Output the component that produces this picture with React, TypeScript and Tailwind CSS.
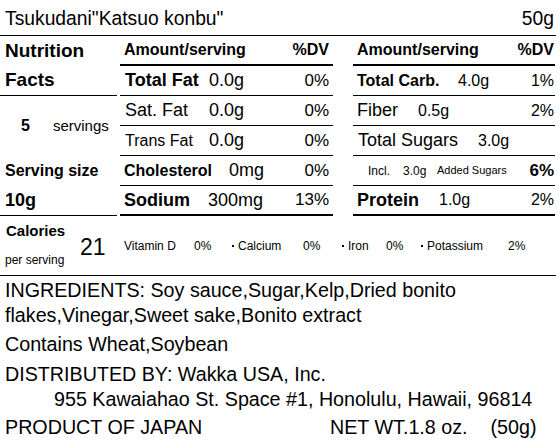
import React from "react";

function Row({
  children,
  thick,
  last,
}: {
  children: React.ReactNode;
  thick?: boolean;
  last?: boolean;
}) {
  return (
    <div
      className={
        "h-[30px] flex items-center border-black " +
        (thick ? "border-b-2" : last ? "" : "border-b")
      }
    >
      {children}
    </div>
  );
}

export default function App() {
  return (
    <div className="w-[560px] h-[443px] bg-white text-black overflow-hidden font-['Liberation_Sans',Arial,sans-serif]">
      {/* Title */}
      <div className="w-[556px] h-[36px] border-b border-black flex justify-between pt-[8px] pl-[5px] pr-[2px] text-[19.3px] leading-[22px]">
        <span>Tsukudani"Katsuo konbu"</span>
        <span>50g</span>
      </div>

      {/* Main */}
      <div className="flex h-[180px]">
        {/* Left column */}
        <div className="w-[117px] flex flex-col">
          <div className="h-[30px] flex items-center pl-[5px] font-bold text-[19px]">Nutrition</div>
          <div className="h-[30px] flex items-center pl-[5px] font-bold text-[19px] border-b border-black">Facts</div>
          <div className="h-[60px] flex items-center pl-[21px]">
            <span className="font-bold text-[16px]">5</span>
            <span className="ml-[23px] text-[15px]">servings</span>
          </div>
          <div className="h-[30px] flex items-center pl-[5px] font-bold text-[16px]">Serving size</div>
          <div className="h-[30px] flex items-center pl-[5px] font-bold text-[18px] border-b border-black">10g</div>
        </div>

        {/* Left table */}
        <div className="w-[213px] ml-[3px] flex flex-col">
          <Row thick>
            <span className="pl-[4px] font-bold text-[16px] flex-1">Amount/serving</span>
            <span className="pr-[4px] font-bold text-[16px]">%DV</span>
          </Row>
          <Row>
            <span className="pl-[5px] w-[89px] font-bold text-[18px]">Total Fat</span>
            <span className="text-[18px] flex-1">0.0g</span>
            <span className="pr-[4px] text-[17px]">0%</span>
          </Row>
          <Row>
            <span className="pl-[5px] w-[89px] text-[18px]">Sat. Fat</span>
            <span className="text-[18px] flex-1">0.0g</span>
            <span className="pr-[4px] text-[17px]">0%</span>
          </Row>
          <Row>
            <span className="pl-[5px] w-[89px] text-[16px]">Trans Fat</span>
            <span className="text-[18px] flex-1">0.0g</span>
            <span className="pr-[4px] text-[17px]">0%</span>
          </Row>
          <Row>
            <span className="pl-[4px] w-[109px] font-bold text-[16px]">Cholesterol</span>
            <span className="text-[18px] flex-1">0mg</span>
            <span className="pr-[4px] text-[17px]">0%</span>
          </Row>
          <Row thick>
            <span className="pl-[4px] w-[88px] font-bold text-[18px]">Sodium</span>
            <span className="text-[18px] flex-1">300mg</span>
            <span className="pr-[4px] text-[17px]">13%</span>
          </Row>
        </div>

        {/* Right table */}
        <div className="w-[202px] ml-[20px] flex flex-col">
          <Row thick>
            <span className="pl-[4px] font-bold text-[16px] flex-1">Amount/serving</span>
            <span className="pr-[1px] font-bold text-[16px]">%DV</span>
          </Row>
          <Row>
            <span className="pl-[4px] w-[105px] font-bold text-[16px]">Total Carb.</span>
            <span className="text-[16px] flex-1">4.0g</span>
            <span className="pr-[1px] text-[16px]">1%</span>
          </Row>
          <Row>
            <span className="pl-[4px] w-[65px] text-[18px]">Fiber</span>
            <span className="text-[16px] flex-1">0.5g</span>
            <span className="pr-[1px] text-[16px]">2%</span>
          </Row>
          <Row>
            <span className="pl-[5px] w-[125px] text-[18px]">Total Sugars</span>
            <span className="text-[16px] flex-1">3.0g</span>
          </Row>
          <Row>
            <span className="pl-[15px] w-[50px] text-[12px]">Incl.</span>
            <span className="w-[34px] text-[12px]">3.0g</span>
            <span className="text-[11px] flex-1">Added Sugars</span>
            <span className="pr-[1px] font-bold text-[17px]">6%</span>
          </Row>
          <Row thick>
            <span className="pl-[4px] w-[86px] font-bold text-[18px]">Protein</span>
            <span className="text-[16px] flex-1">1.0g</span>
            <span className="pr-[1px] text-[16px]">2%</span>
          </Row>
        </div>
      </div>

      {/* Calories */}
      <div className="w-[556px] h-[60px] border-b border-black flex">
        <div className="w-[80px] flex flex-col pt-[6px]">
          <span className="pl-[6px] font-bold text-[15px] leading-[18px]">Calories</span>
          <span className="pl-[5px] mt-[13px] text-[12px] leading-[14px]">per serving</span>
        </div>
        <div className="w-[44px] flex items-center text-[23px] leading-[26px] pt-[3px]">21</div>
        <div className="flex items-center text-[12px] pt-[1px]">
          <span className="w-[70px]">Vitamin D</span>
          <span className="w-[38px]">0%</span>
          <span className="w-[71px] flex items-center">
            <span className="inline-block w-[2px] h-[2px] bg-black mr-[4px]"></span>Calcium
          </span>
          <span className="w-[39px]">0%</span>
          <span className="w-[44px] flex items-center">
            <span className="inline-block w-[2px] h-[2px] bg-black mr-[4px]"></span>Iron
          </span>
          <span className="w-[35px]">0%</span>
          <span className="w-[87px] flex items-center">
            <span className="inline-block w-[2px] h-[2px] bg-black mr-[4px]"></span>Potassium
          </span>
          <span>2%</span>
        </div>
      </div>

      {/* Bottom text */}
      <div className="pl-[5px] text-[19.7px] leading-[25px]">
        <p className="mt-[2px]">
          INGREDIENTS: Soy sauce,Sugar,Kelp,Dried bonito
          <br />
          flakes,Vinegar,Sweet sake,Bonito extract
        </p>
        <p className="mt-[4px]">Contains Wheat,Soybean</p>
        <p className="mt-[5px]">DISTRIBUTED BY: Wakka USA, Inc.</p>
        <p className="pl-[49px]">955 Kawaiahao St. Space #1, Honolulu, Hawaii, 96814</p>
        <div className="mt-[3px] flex">
          <span className="w-[325px]">PRODUCT OF JAPAN</span>
          <span>NET WT.1.8 oz.</span>
          <span className="ml-[23px]">(50g)</span>
        </div>
      </div>
    </div>
  );
}
